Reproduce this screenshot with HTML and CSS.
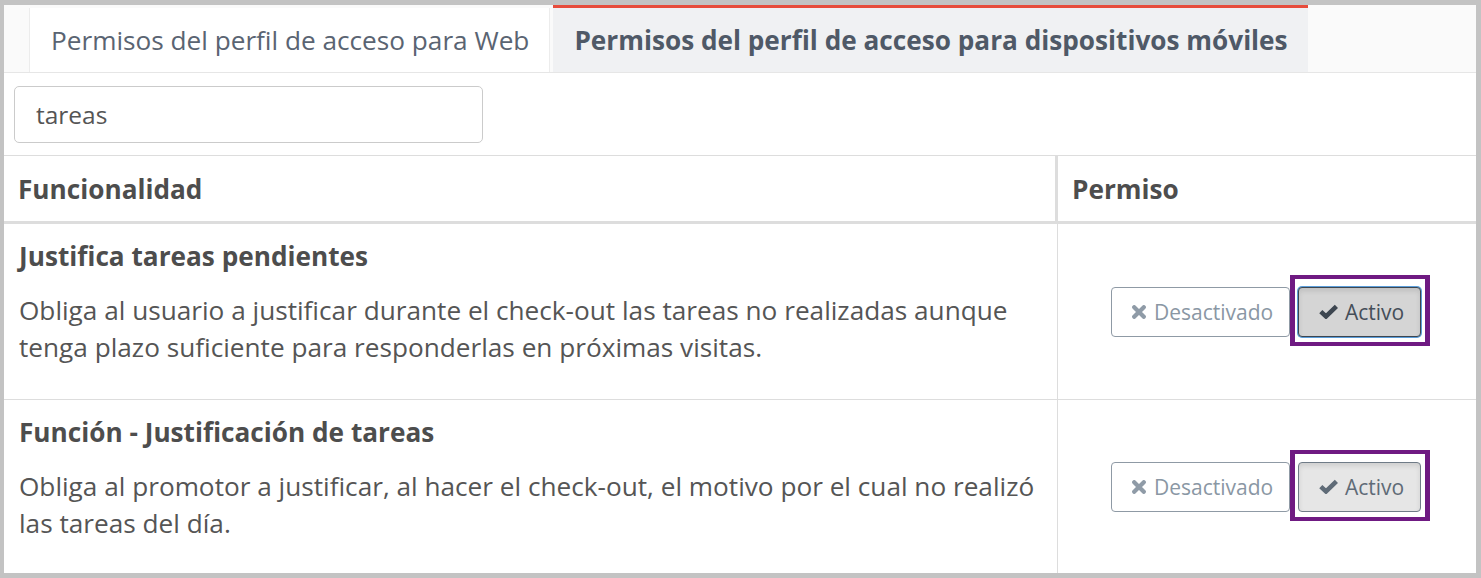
FILE: index.html
```html
<!DOCTYPE html>
<html lang="es">
<head>
<meta charset="utf-8">
<title>Permisos</title>
<link rel="stylesheet" href="styles.css">
</head>
<body>
<div class="frame">
  <div class="tabs">
    <div class="tab">Permisos del perfil de acceso para Web</div>
    <div class="tab active">Permisos del perfil de acceso para dispositivos móviles</div>
  </div>
  <div class="search">
    <input class="search-input" type="text" value="tareas">
  </div>
  <table class="perm">
    <thead>
      <tr>
        <th class="col-func">Funcionalidad</th>
        <th class="col-perm">Permiso</th>
      </tr>
    </thead>
    <tbody>
      <tr>
        <td class="cell-func">
          <div class="title">Justifica tareas pendientes</div>
          <p class="desc">Obliga al usuario a justificar durante el check-out las tareas no realizadas aunque tenga plazo suficiente para responderlas en próximas visitas.</p>
        </td>
        <td class="cell-perm">
          <div class="btns">
            <button class="btn btn-off"><svg class="ico ico-x" viewBox="0 0 14 14"><path d="M2.2 2.2 L11.8 11.8 M11.8 2.2 L2.2 11.8" /></svg>Desactivado</button>
            <span class="mark"><button class="btn btn-on focus"><svg class="ico ico-ok" viewBox="0 0 19 15"><path d="M1.8 7.6 L7 12.4 L17.4 2.4" /></svg>Activo</button></span>
          </div>
        </td>
      </tr>
      <tr>
        <td class="cell-func">
          <div class="title">Función - Justificación de tareas</div>
          <p class="desc">Obliga al promotor a justificar, al hacer el check-out, el motivo por el cual no realizó las tareas del día.</p>
        </td>
        <td class="cell-perm">
          <div class="btns">
            <button class="btn btn-off"><svg class="ico ico-x" viewBox="0 0 14 14"><path d="M2.2 2.2 L11.8 11.8 M11.8 2.2 L2.2 11.8" /></svg>Desactivado</button>
            <span class="mark"><button class="btn btn-on"><svg class="ico ico-ok" viewBox="0 0 19 15"><path d="M1.8 7.6 L7 12.4 L17.4 2.4" /></svg>Activo</button></span>
          </div>
        </td>
      </tr>
    </tbody>
  </table>
</div>
</body>
</html>
```

FILE: styles.css
```css
* { box-sizing: border-box; }
html, body { margin: 0; padding: 0; background: #fff; }
body { font-family: "Open Sans", "DejaVu Sans", sans-serif; color: #555; }

.frame {
  width: 1481px;
  height: 578px;
  border-style: solid;
  border-color: #c3c3c3;
  border-width: 5px 5px 5px 4px;
  overflow: hidden;
  background: #fff;
}

.tabs {
  display: flex;
  align-items: flex-end;
  height: 68px;
  padding-left: 25px;
  background: #fafafa;
  border-bottom: 1px solid #e6e6e6;
}
.tab {
  height: 64px;
  padding: 0 20px 0 21px;
  display: flex;
  align-items: center;
  background: #fff;
  border-left: 1px solid #ececec;
  border-right: 1px solid #ececec;
  font-size: 26.2px;
  color: #5a6472;
  margin-right: 3px;
  white-space: nowrap;
}
.tab.active {
  height: 67px;
  border-top: 3px solid #e74c3c;
  border-left: none;
  border-right: none;
  background: #f0f1f3;
  font-weight: 700;
  color: #4f5967;
  padding: 0 20px 0 21px;
}

.search {
  padding: 13px 10px 12px 10px;
}
.search-input {
  display: block;
  width: 469px;
  height: 57px;
  border: 1px solid #cbcbcb;
  border-radius: 5px;
  padding: 0 21px;
  font-family: "Open Sans", sans-serif;
  font-size: 24.5px;
  color: #555;
  background: #fff;
  outline: none;
}

.perm {
  width: 100%;
  border-collapse: separate;
  border-spacing: 0;
  table-layout: fixed;
}
.perm th {
  height: 69px;
  text-align: left;
  font-size: 26.2px;
  font-weight: 700;
  color: #4d4d4d;
  padding: 0 14px;
  border-top: 1px solid #dddddd;
  border-bottom: 3px solid #dddddd;
}
.perm th.col-func { width: 1054px; border-right: 3px solid #dddddd; }
.perm th.col-perm { padding-left: 14px; }

.perm td {
  vertical-align: top;
  border-bottom: 1px solid #dddddd;
}
.perm td.cell-func {
  padding: 16px 10px 0 15px;
  border-right: 1px solid #dddddd;
  height: 176px;
}
.perm tr:last-child td { border-bottom: none; height: 173px; }

.title {
  font-size: 26.2px;
  font-weight: 700;
  line-height: 33px;
  color: #4d4d4d;
}
.desc {
  margin: 19px 0 0 0;
  font-size: 26.2px;
  line-height: 37px;
  color: #555;
}

.perm td.cell-perm {
  vertical-align: middle;
  padding: 0;
}
.btns {
  display: flex;
  justify-content: center;
  align-items: center;
  gap: 8px;
  padding-right: 2px;
}
.btn {
  display: flex;
  align-items: center;
  height: 50px;
  padding: 0 0 0 20px;
  font-family: "Open Sans", sans-serif;
  font-size: 21px;
  border-radius: 4px;
  background: #fff;
  cursor: pointer;
  white-space: nowrap;
}
.ico {
  fill: none;
}
.ico-x {
  width: 14px;
  height: 14px;
  margin-right: 8px;
  stroke-linecap: round;
  stroke-width: 4.2;
}
.ico-ok {
  width: 19px;
  height: 15px;
  margin-right: 7px;
  stroke-linecap: butt;
  stroke-linejoin: miter;
  stroke-width: 4.6;
}
.btn-off {
  width: 179px;
  border: 1px solid #8f9aa5;
  color: #8a97a4;
}
.btn-off .ico { stroke: #8f9ba7; }
.btn-on {
  width: 123px;
  border: 1px solid #6f7b87;
  background: #e6e6e6;
  color: #5f6b77;
  box-shadow: inset 0 3px 5px rgba(0,0,0,0.1);
}
.btn-on .ico { stroke: #5f6b77; }
.btn-on.focus {
  border-color: #3d4650;
  background: #d5d5d5;
  color: #454e59;
  box-shadow: 0 0 0 1px #5b9dd9, inset 0 3px 5px rgba(0,0,0,0.1);
}
.btn-on.focus .ico { stroke: #3d4650; }

.mark {
  position: relative;
  display: block;
}
.mark::after {
  content: "";
  position: absolute;
  top: -12px;
  bottom: -9px;
  left: -8px;
  right: -9px;
  border-style: solid;
  border-color: #6f1a82;
  border-width: 4px 5px;
  pointer-events: none;
}
```
